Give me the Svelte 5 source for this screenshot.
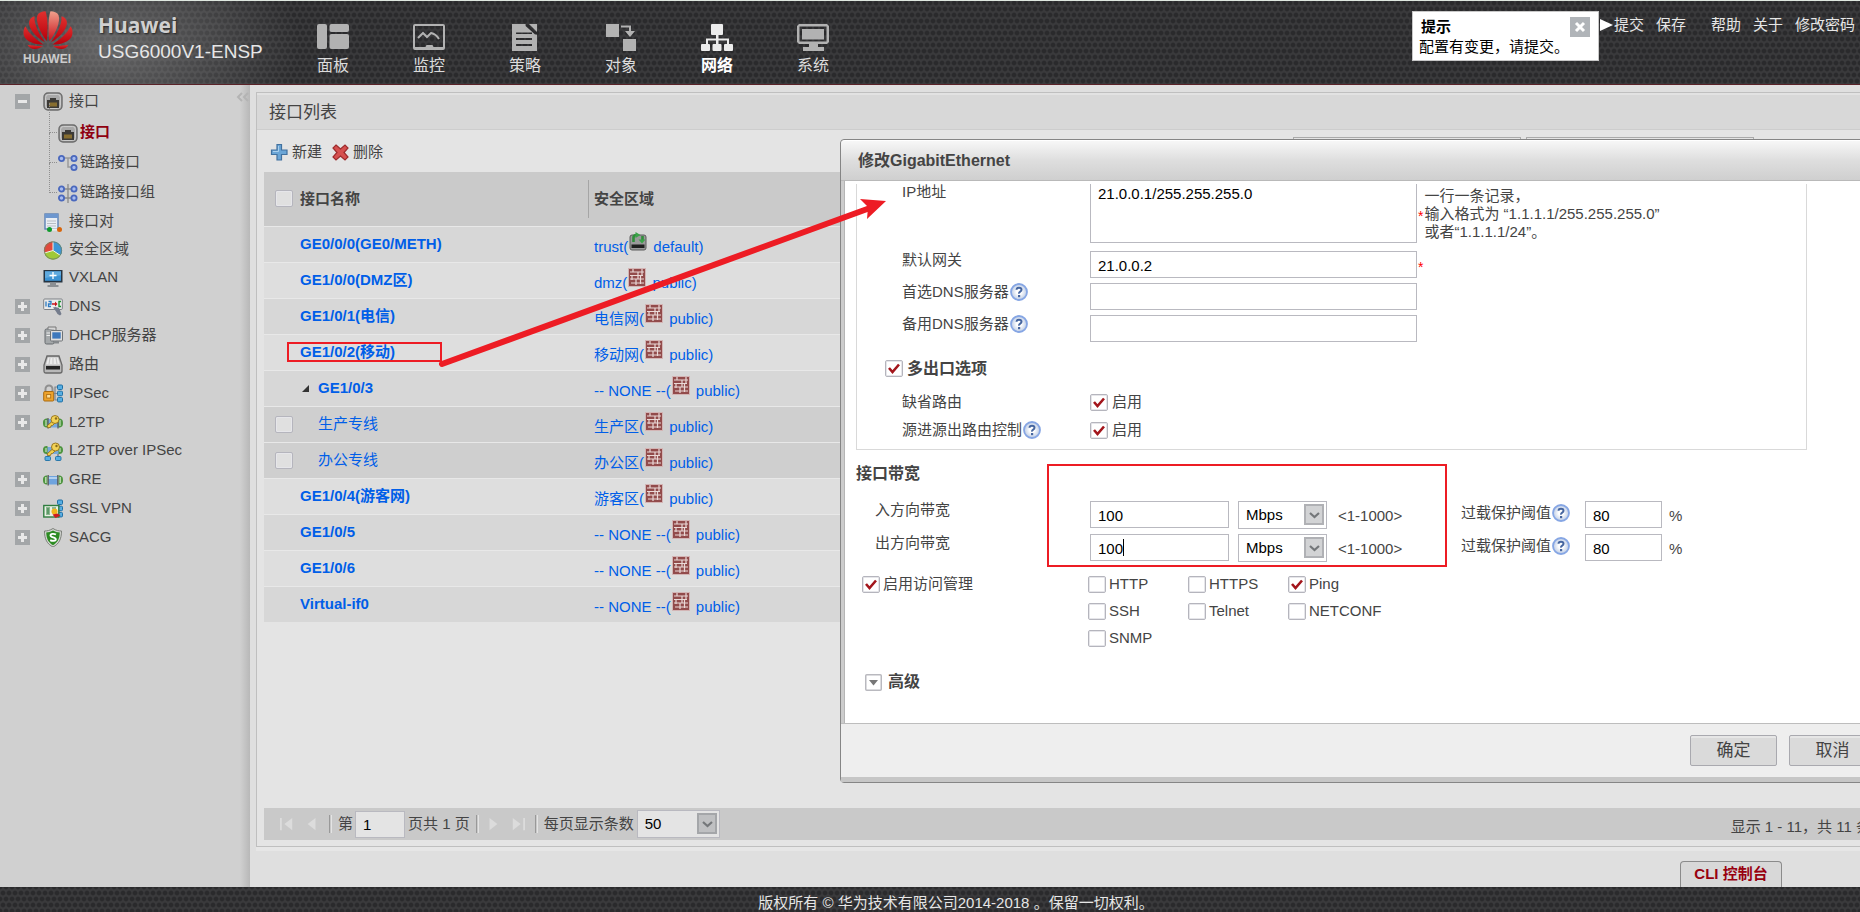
<script>
  const icons = {
    port: '<rect x="1" y="1" width="18" height="17" rx="4" fill="#a9a9a9" stroke="#6b6b6b" stroke-width="1.4"/><rect x="2.6" y="2.4" width="14.8" height="14" rx="3" fill="none" stroke="#cfcfcf"/><path d="M4 16V8h3V6h6v2h3v8z" fill="#3c3a36"/><path d="M7 10.500v4M9 10.500v4M11 10.500v4M13 10.500v4" stroke="#c79a2c" stroke-width="1.1"/>',
    link: '<path d="M6 4h10M10 4v9h5" fill="none" stroke="#9a9a9a" stroke-width="1.5"/><g fill="#a9bdf0" stroke="#4a68bd" stroke-width="1.8"><circle cx="3.500" cy="4.500" r="2.600"/><circle cx="16" cy="4.500" r="2.600"/><circle cx="16" cy="13.500" r="2.600"/></g>',
    linkgroup: '<path d="M10 0v19M6 5h8M6 14h8" fill="none" stroke="#8a8a8a" stroke-width="1.3"/><g fill="#a9bdf0" stroke="#4a68bd" stroke-width="1.8"><circle cx="3.500" cy="5" r="2.600"/><circle cx="16" cy="5" r="2.600"/><circle cx="3.500" cy="14" r="2.600"/><circle cx="16" cy="14" r="2.600"/></g>',
    pair: '<rect x="2" y="1" width="13" height="15" fill="#e9eef4" stroke="#5d82b5" stroke-width="1.4"/><rect x="2" y="1" width="13" height="4" fill="#6d97cf"/><path d="M4 8h9M4 10.500h9M4 13h9" stroke="#b8bdc4"/><path d="M7 16.500h9" stroke="#eee" stroke-width="2"/><circle cx="6.500" cy="16.500" r="2.500" fill="#0f9a2c"/><circle cx="16.500" cy="16.500" r="2.500" fill="#d8650b"/>',
    zone: '<circle cx="10" cy="9.500" r="9" fill="#5a9a22"/><path d="M10 9.500V.5A9 9 0 0 0 1.300 12z" fill="#e0493c"/><path d="M10 9.500V.5a9 9 0 0 1 7.500 14z" fill="#3d96d6"/><path d="M10 9.500 1.300 12A9 9 0 0 0 17.500 14.500z" fill="#9fc938"/><path d="M10 9.500V.5M10 9.500 1.300 12M10 9.500l7.500 5" stroke="#f3f3e8" stroke-width="1"/><circle cx="10" cy="9.500" r="8.600" fill="none" stroke="#6f7f6a" stroke-width=".8"/>',
    vxlan: '<rect x=".5" y="1" width="19" height="12.500" fill="#263442"/><rect x="2" y="2.300" width="16" height="9.500" fill="#3c93d4"/><path d="M2 2.300h16v4L2 9z" fill="#6db4e4" opacity=".7"/><path d="M10 3v7M6.500 6.500h7" stroke="#fff" stroke-width="1.300"/><path d="M7 13.500h6v2.500h2.500v2h-11v-2H7z" fill="#8b8f93"/>',
    dns: '<rect x=".7" y="2" width="18.600" height="10.500" rx="1" fill="#ececec" stroke="#7d8186"/><path d="M3 4.500v5M5.500 4.500H8v2.500H5.500v2.500H8" fill="none" stroke="#2c7ac2" stroke-width="1.300"/><path d="M9 6.300h3V4.500l2.500 2.500L12 9.500V7.700H9z" fill="#c8151b"/><path d="M18 4.500h-2v5h2" fill="none" stroke="#18912e" stroke-width="1.400"/><path d="M10 10.500l2.500-.5 3.500 1 2.500 6-1.500 1.500-2.500-1.500-1.500-2.500z" fill="#747c8c"/>',
    dhcp: '<rect x="2" y="3" width="9" height="15" rx="1.500" fill="#a4a8aa" stroke="#666b6e"/><path d="M5 3V1h8v3" fill="#d6d6d6" stroke="#777"/><path d="M3.500 7h5M3.500 9.500h5" stroke="#eee"/><rect x="7.500" y="4.500" width="12" height="10.500" rx="1" fill="#dedede" stroke="#6e7376"/><rect x="9.300" y="6.300" width="8.400" height="6.300" fill="#3c78bd"/><path d="M11 15h5v2.500h-5z" fill="#85898c"/>',
    route: '<path d="M4 1h12l3 9v6q0 2-2 2H3q-2 0-2-2v-6z" fill="#b9b9b9" stroke="#686868" stroke-width="1.300"/><path d="M5 2.500h10l2 7H3z" fill="#ececec"/><path d="M7 3l-1 6M10 3v6M13 3l1 6" stroke="#c5c5c5"/><rect x="3" y="11" width="14" height="3.500" fill="#262626"/>',
    ipsec: '<path d="M2.500 8V5a3.500 3.500 0 0 1 7 0v3" fill="none" stroke="#8f8f8f" stroke-width="2"/><rect x=".7" y="7.500" width="10" height="9.500" rx="1" fill="#eda22b" stroke="#a96a10"/><rect x="3.700" y="10.500" width="4" height="3.500" fill="#ffe09a" stroke="#a96a10" stroke-width=".8"/><path d="M15 3h-3v13h3M11 9.500h4" fill="none" stroke="#7d838a" stroke-width="1.200"/><g fill="#57aee2" stroke="#1e6fa5"><rect x="14.500" y="1" width="5" height="4.500" rx="1"/><rect x="14.500" y="7.200" width="5" height="4.500" rx="1"/><rect x="14.500" y="13.400" width="5" height="4.500" rx="1"/></g>',
    l2tp: '<rect x="4" y="6" width="12" height="8.500" fill="#78a9dd"/><path d="M4.500 5.500C1 5.500 0 7 0 10s1 4.500 4.500 4.500zM15.500 5.500C19 5.500 20 7 20 10s-1 4.500-4.500 4.500z" fill="#4e9440"/><path d="M3 7v6M17 7v6" stroke="#b9dcae" stroke-width="1.300"/><path d="M5 5v10.500M15 5v10.500" stroke="#555" stroke-width="1.200"/><path d="M10 7.500l-6 5.500 1 1.800 2.500-.4.500-1.600 1.600-.4 3-3" fill="#f0cf4d" stroke="#94711a" stroke-width=".9"/><circle cx="12" cy="6.500" r="4" fill="#f2d257" stroke="#94711a" stroke-width=".9"/><circle cx="13" cy="5.500" r="1.200" fill="#8a6c1c"/>',
    l2tpipsec: '<rect x="4" y="5" width="12" height="7" fill="#78a9dd"/><path d="M4.500 4C1 4 0 5.500 0 8s1 4 4.500 4zM15.500 4C19 4 20 5.500 20 8s-1 4-4.500 4z" fill="#4e9440"/><path d="M3 6v4M17 6v4" stroke="#b9dcae" stroke-width="1.300"/><path d="M5 12v3M15 12v3" stroke="#555"/><path d="M10 6.500l-6 5.500 1 1.800 2.500-.4.500-1.600 1.600-.4 3-3" fill="#f0cf4d" stroke="#94711a" stroke-width=".9"/><circle cx="12.500" cy="5" r="4" fill="#f2d257" stroke="#94711a" stroke-width=".9"/><circle cx="13.500" cy="4" r="1.200" fill="#8a6c1c"/><g fill="#57aee2" stroke="#1e6fa5" stroke-width=".9"><rect x="2" y="14.500" width="5.500" height="4" rx="1"/><rect x="12.500" y="14.500" width="5.500" height="4" rx="1"/></g>',
    gre: '<rect x="5" y="6" width="10" height="8.500" fill="#6fa4de"/><path d="M5 8h10" stroke="#b4d1f0" stroke-width="2"/><path d="M4.500 5.500C1 5.500 0 7 0 10s1 4.500 4.500 4.500zM15.500 5.500C19 5.500 20 7 20 10s-1 4.500-4.500 4.500z" fill="#4e9440"/><path d="M2.800 7v6M17.200 7v6" stroke="#b9dcae" stroke-width="1.500"/><path d="M5.200 5v10.500M14.800 5v10.500" stroke="#5c5c5c" stroke-width="1.300"/>',
    ssl: '<path d="M16 2v15" stroke="#7d838a"/><g fill="#57aee2" stroke="#1e6fa5"><rect x="14.500" y="1" width="5" height="4.500" rx="1"/><rect x="14.500" y="7.200" width="5" height="4.500" rx="1"/><rect x="14.500" y="13.400" width="5" height="4.500" rx="1"/></g><rect x=".8" y="6.500" width="15" height="11.500" fill="#e9f1e4" stroke="#2f7d3f" stroke-width="1.400"/><path d="M3 9h4M3 11h4M3 13h4M3 15h4M5 9v6M9 9h4" stroke="#2f7d3f"/><circle cx="11.500" cy="12.500" r="3" fill="#f1b41b"/><path d="M9.500 15.500l5-1 3 2-2 1-3 1.500z" fill="#cf1b1f"/>',
    sacg: '<path d="M10 .5c3 2 6 2.500 8.500 2.500C18.500 11 16 16 10 19 4 16 1.500 11 1.500 3 4 3 7 2.500 10 .5z" fill="#d5d8d3" stroke="#7b7f79"/><path d="M10 2.500c2 1.300 4.500 2 6.800 2C16.500 11 14.500 14.800 10 17.200 5.500 14.800 3.500 11 3.200 4.500c2.300 0 4.800-.7 6.800-2z" fill="#2c8b22"/><path d="M13 6.500c-2-1-5.500-1-5.500 1 0 2.200 5.300 1.500 5.300 3.700 0 2-3.500 2-5.600.9" fill="none" stroke="#fff" stroke-width="1.900"/>'
  };

  const navIcons = {
    panel: '<rect x="0" y="0" width="10" height="25" rx="2"/><rect x="12.500" y="0" width="19.500" height="8" rx="2"/><rect x="12.500" y="10" width="19.500" height="15" rx="2"/>',
    monitor: '<path fill-rule="evenodd" d="M2 0h28a2 2 0 0 1 2 2v22a2 2 0 0 1-2 2H2a2 2 0 0 1-2-2V2a2 2 0 0 1 2-2zM2 2v21h28V2z"/><path d="M5 14l5-5 4 4 4-4q5 1 8 6" fill="none" stroke="currentColor" stroke-width="2"/><path d="M12 24l1.500-3h6l1.500 3z"/>',
    policy: '<path fill-rule="evenodd" d="M3 0h13l12 11v16H3zM7 8.500V10h16V8.500zM7 14v2h16v-2zM7 20v2h16v-2z"/><path d="M20 0h8v8z"/><path d="M17 1l10 9" stroke="#2b2b2d" stroke-width="2"/>',
    object: '<rect x="1" y="0" width="13" height="13"/><rect x="18" y="15" width="13" height="12"/><path d="M16 1.500h10V7h4l-5 6-5-6h4V3.500h-8z"/>',
    network: '<rect x="10" y="0" width="12" height="11" rx="1"/><path d="M15 10h2.500v4.500H28v6h-2v-4h-8.500v4H15v-4H7v4H5v-6h10z"/><rect x="0" y="20" width="9" height="7" rx="1"/><rect x="11.500" y="20" width="9" height="7" rx="1"/><rect x="23" y="20" width="9" height="7" rx="1"/>',
    system: '<path fill-rule="evenodd" d="M2 0h28l2 2v16l-2 2H2l-2-2V2zM2.500 2.500v15h27v-15z"/><rect x="5" y="5" width="22" height="10.500"/><path d="M12 20h9v3h6v4H6v-4h6z"/>'
  };

  const nav = [
    { icon: 'panel', label: '面板' },
    { icon: 'monitor', label: '监控' },
    { icon: 'policy', label: '策略' },
    { icon: 'object', label: '对象' },
    { icon: 'network', label: '网络', active: true },
    { icon: 'system', label: '系统' }
  ];

  const tree = [
    {
      icon: 'port', label: '接口', toggle: 'minus',
      children: [
        { icon: 'port', label: '接口', active: true },
        { icon: 'link', label: '链路接口' },
        { icon: 'linkgroup', label: '链路接口组' }
      ]
    },
    { icon: 'pair', label: '接口对' },
    { icon: 'zone', label: '安全区域' },
    { icon: 'vxlan', label: 'VXLAN' },
    { icon: 'dns', label: 'DNS', toggle: 'plus' },
    { icon: 'dhcp', label: 'DHCP服务器', toggle: 'plus' },
    { icon: 'route', label: '路由', toggle: 'plus' },
    { icon: 'ipsec', label: 'IPSec', toggle: 'plus' },
    { icon: 'l2tp', label: 'L2TP', toggle: 'plus' },
    { icon: 'l2tpipsec', label: 'L2TP over IPSec' },
    { icon: 'gre', label: 'GRE', toggle: 'plus' },
    { icon: 'ssl', label: 'SSL VPN', toggle: 'plus' },
    { icon: 'sacg', label: 'SACG', toggle: 'plus' }
  ];

  const rows = [
    { name: 'GE0/0/0(GE0/METH)', zone: 'trust', vsys: 'default' },
    { name: 'GE1/0/0(DMZ区)', zone: 'dmz', vsys: 'public' },
    { name: 'GE1/0/1(电信)', zone: '电信网', vsys: 'public' },
    { name: 'GE1/0/2(移动)', zone: '移动网', vsys: 'public' },
    { name: 'GE1/0/3', zone: '-- NONE --', vsys: 'public', open: true },
    { name: '生产专线', zone: '生产区', vsys: 'public', child: true },
    { name: '办公专线', zone: '办公区', vsys: 'public', child: true },
    { name: 'GE1/0/4(游客网)', zone: '游客区', vsys: 'public' },
    { name: 'GE1/0/5', zone: '-- NONE --', vsys: 'public' },
    { name: 'GE1/0/6', zone: '-- NONE --', vsys: 'public' },
    { name: 'Virtual-if0', zone: '-- NONE --', vsys: 'public' }
  ];

  const bandwidths = [
    { id: 'in', label: '入方向带宽' },
    { id: 'out', label: '出方向带宽', focused: true }
  ];

  const services = ['HTTP', 'HTTPS', 'Ping', 'SSH', 'Telnet', 'NETCONF', 'SNMP'];

  let addresses = $state('21.0.0.1/255.255.255.0');
</script>

{#snippet help()}
  <svg class="help" viewBox="0 0 18 18" aria-hidden="true">
    <defs>
      <radialGradient id="help-fill"><stop offset="0.3" stop-color="#fff" /><stop offset="1" stop-color="#bccbe4" /></radialGradient>
    </defs>
    <circle cx="9" cy="9" r="8" fill="url(#help-fill)" stroke="#86a6e4" stroke-width="1.800" />
    <path d="M6.500 6.800Q6.500 4.700 9 4.700t2.500 2q0 1.100-1.300 1.900T9 10.700" fill="none" stroke="#45659f" stroke-width="2" />
    <rect x="8" y="12" width="2.200" height="2.200" fill="#45659f" />
  </svg>
{/snippet}

{#snippet arrow()}
  <svg class="arrow" viewBox="0 0 20 21" aria-hidden="true">
    <rect x="1" y="1" width="18" height="19" fill="none" stroke="currentColor" stroke-width="2" />
    <path d="M6 9l4.500 4L15 9" fill="none" stroke="#74777a" stroke-width="2.200" />
  </svg>
{/snippet}

<div class="page">
  <header class="top">
    <div class="logo">
      <svg viewBox="0 0 50 39" aria-hidden="true">
        <defs>
          <linearGradient id="petal" x1="0" y1="0" x2="0" y2="1"><stop offset="0" stop-color="#e0302e" /><stop offset="1" stop-color="#b8000c" /></linearGradient>
          <linearGradient id="petal-hi" x1="0" y1="0" x2="0" y2="1"><stop offset="0" stop-color="#f0a08c" /><stop offset="1" stop-color="#c8101a" /></linearGradient>
          <g id="petals">
            <path d="M22 31C13 27 4 16 6.500 9.500 7.500 7 10 5.700 11.500 5.300 11 14 16 23 22 31z" />
            <path d="M20.500 33.500C10 34 0 29 .5 21.500.6 18 1.500 16.500 2.500 15.300 6 23 13 28.500 20.500 33.500z" />
            <path d="M20 35C14 39.500 7 39 4.500 33.800 9 34.500 14 35.300 20 35z" />
          </g>
          <path id="center-petal" d="M23.700 30C18 23 12 11 14.500 4 16 1.500 19 .5 22.500.3 24.800 6 25 20 23.700 30z" />
        </defs>
        <use href="#petals" fill="url(#petal)" />
        <use href="#petals" fill="url(#petal)" transform="translate(50) scale(-1 1)" />
        <use href="#center-petal" fill="url(#petal)" />
        <use href="#center-petal" fill="url(#petal-hi)" transform="translate(50) scale(-1 1)" />
      </svg>
      <span>HUAWEI</span>
    </div>
    <div class="product">
      <strong>Huawei</strong>
      <span>USG6000V1-ENSP</span>
    </div>
    <nav class="main-nav">
      {#each nav as item}
        <a href="#{item.icon}" class:active={item.active}>
          <svg viewBox="0 0 32 27" fill="currentColor" aria-hidden="true">{@html navIcons[item.icon]}</svg>
          <span>{item.label}</span>
        </a>
      {/each}
    </nav>
    <div class="notice" role="status">
      <div class="notice-head">
        <strong>提示</strong>
        <button type="button" aria-label="关闭提示">
          <svg viewBox="0 0 20 20" aria-hidden="true"><path d="M6 6l8 8M14 6l-8 8" stroke="#fff" stroke-width="3" /></svg>
        </button>
      </div>
      <p>配置有变更，请提交。</p>
    </div>
    <div class="actions">
      <svg class="pointer" viewBox="0 0 14 14" aria-hidden="true"><path d="M0 1l13 6-13 6z" fill="#fff" /></svg>
      <a href="#commit">提交</a>
      <a href="#save">保存</a>
      <a class="apart" href="#help">帮助</a>
      <a href="#about">关于</a>
      <a href="#password">修改密码</a>
    </div>
  </header>

  <div class="middle">
    <aside class="sidebar">
      <ul class="tree">
        {#each tree as item}
          <li>
            <div class="node" class:leaf={!item.toggle}>
              {#if item.toggle}
                <button type="button" class="toggle" class:plus={item.toggle === 'plus'} aria-label="展开或收起 {item.label}"></button>
              {:else}
                <span class="no-toggle"></span>
              {/if}
              <svg class="ico" viewBox="0 0 20 19" aria-hidden="true">{@html icons[item.icon]}</svg>
              <a href="#{item.icon}">{item.label}</a>
            </div>
            {#if item.children}
              <ul class="sub">
                {#each item.children as child}
                  <li class="node">
                    <svg class="ico" viewBox="0 0 20 19" aria-hidden="true">{@html icons[child.icon]}</svg>
                    <a href="#{child.icon}" class:active={child.active}>{child.label}</a>
                  </li>
                {/each}
              </ul>
            {/if}
          </li>
        {/each}
      </ul>
      <button type="button" class="collapse" aria-label="收起菜单">
        <svg viewBox="0 0 14 20" aria-hidden="true"><path d="M6 6l-4 4 4 4M12 6l-4 4 4 4" fill="none" stroke="#b4b4b4" stroke-width="2" /></svg>
      </button>
    </aside>

    <main>
      <section class="panel">
        <h1>接口列表</h1>
        <div class="toolbar">
          <button type="button">
            <svg viewBox="0 0 19 19" aria-hidden="true"><path d="M7 1.500h4.500V7H17v4.500h-5.500V17H7v-5.500H1.500V7H7z" fill="#6aa5d6" stroke="#41719f" stroke-width="1.200" /><path d="M8.500 3v5.500H3" fill="none" stroke="#a9d0ee" /></svg>
            新建
          </button>
          <button type="button">
            <svg viewBox="0 0 19 19" aria-hidden="true"><path d="M5 2l4.500 4L14 2l3 3-4 4.500 4 4.500-3 3-4.500-4L5 17l-3-3 4-4.500L2 5z" fill="#d6504f" stroke="#9c2b2c" stroke-width="1.200" /></svg>
            删除
          </button>
          <span class="search">
            <input type="text" aria-label="接口名称" />
            <input type="text" aria-label="安全区域" />
          </span>
        </div>

        <table>
          <thead>
            <tr>
              <th class="check"><input type="checkbox" aria-label="全选" /></th>
              <th class="name">接口名称</th>
              <th class="zone">安全区域</th>
            </tr>
          </thead>
          <tbody>
            {#each rows as row}
              <tr class:child={row.child}>
                <td class="check">
                  {#if row.child}<input type="checkbox" aria-label={row.name} />{/if}
                </td>
                <td class="name">
                  <div class="iface">
                    {#if row.open || row.child}
                      <span class="slot">
                        {#if row.open}
                          <svg viewBox="0 0 9 9" aria-hidden="true"><path d="M8 1v7H1z" fill="#333" /></svg>
                        {/if}
                      </span>
                    {/if}
                    <a href="#edit">{row.name}</a>
                  </div>
                </td>
                <td class="zone">
                  <a href="#zone">{row.zone}(<svg viewBox="0 0 18 19" aria-hidden="true">
                    {#if row.vsys === 'default'}
                      <rect x="1" y="3" width="16" height="15" rx="2" fill="#9a9a9a" stroke="#5c5c5c" />
                      <rect x="2.500" y="12.500" width="13" height="3.500" fill="#1f1f1f" />
                      <path d="M4.500 10V5.500Q4.500 3 7.500 3M13.500 4v5" fill="none" stroke="#2f8f3a" stroke-width="2.600" />
                      <path d="M6.500 0l5 3-5 3zM9.500 7.500h7l-3.500 4z" fill="#3ba449" />
                    {:else}
                      <rect x=".5" y=".5" width="17" height="18" fill="#924b4b" stroke="#d3b5b5" />
                      <path d="M2 4h14M2 7.500h13M2 11h14M3 15h13M5 1v3M10 4v7M14 1v6M4 7v5M8 11v6M12.500 7v9" stroke="#ead9d7" stroke-width="1.200" />
                    {/if}
                  </svg>&nbsp;{row.vsys})</a>
                </td>
              </tr>
            {/each}
          </tbody>
        </table>

        <div class="pager">
          <button type="button" aria-label="首页"><svg viewBox="0 0 16 16" aria-hidden="true"><path d="M1 1v14" stroke="currentColor" stroke-width="2" /><path d="M14 1v14L5 8z" fill="currentColor" /></svg></button>
          <button type="button" aria-label="上一页"><svg viewBox="0 0 16 16" aria-hidden="true"><path d="M12 1v14L3 8z" fill="currentColor" /></svg></button>
          <i></i>
          <label for="page-no">第</label>
          <input id="page-no" type="text" value="1" />
          <span class="total">页共 1 页</span>
          <i></i>
          <button type="button" aria-label="下一页"><svg viewBox="0 0 16 16" aria-hidden="true"><path d="M4 1v14l9-7z" fill="currentColor" /></svg></button>
          <button type="button" aria-label="末页"><svg viewBox="0 0 16 16" aria-hidden="true"><path d="M2 1v14l9-7z" fill="currentColor" /><path d="M15 1v14" stroke="currentColor" stroke-width="2" /></svg></button>
          <i></i>
          <label for="page-size">每页显示条数</label>
          <span class="select">
            <select id="page-size"><option>50</option></select>
            {@render arrow()}
          </span>
          <span class="summary">显示 1 - 11，共 11 条</span>
        </div>
      </section>
      <div class="dock"><button type="button">CLI 控制台</button></div>
    </main>
  </div>

  <footer class="bottom">版权所有 © 华为技术有限公司2014-2018 。保留一切权利。</footer>

  <div class="dialog" role="dialog" aria-labelledby="dialog-title">
    <h2 id="dialog-title">修改GigabitEthernet</h2>
    <div class="body">
      <div class="group">
        <div class="row tall">
          <label for="ip">IP地址</label>
          <textarea id="ip" rows="3" bind:value={addresses}></textarea>
          <span class="star">*</span>
          <p class="hint">一行一条记录，<br />输入格式为 “1.1.1.1/255.255.255.0”<br />或者“1.1.1.1/24”。</p>
        </div>
        <div class="row">
          <label for="gw">默认网关</label>
          <input id="gw" type="text" value="21.0.0.2" />
          <span class="star">*</span>
        </div>
        <div class="row">
          <label for="dns1">首选DNS服务器{@render help()}</label>
          <input id="dns1" type="text" />
        </div>
        <div class="row">
          <label for="dns2">备用DNS服务器{@render help()}</label>
          <input id="dns2" type="text" />
        </div>
        <label class="tick multi"><input type="checkbox" checked />多出口选项</label>
        <div class="row short">
          <span>缺省路由</span>
          <label class="tick"><input type="checkbox" checked />启用</label>
        </div>
        <div class="row short">
          <span>源进源出路由控制{@render help()}</span>
          <label class="tick"><input type="checkbox" checked />启用</label>
        </div>
      </div>

      <h3>接口带宽</h3>
      <div class="bands">
        {#each bandwidths as band}
          <div class="band">
            <label for="bw-{band.id}">{band.label}</label>
            <span class="amount">
              <input id="bw-{band.id}" type="text" value="100" />
              {#if band.focused}<span class="caret"></span>{/if}
            </span>
            <span class="select">
              <select aria-label="{band.label}单位"><option>Mbps</option></select>
              {@render arrow()}
            </span>
            <span class="range">&lt;1-1000&gt;</span>
            <label class="limit" for="limit-{band.id}">过载保护阈值{@render help()}</label>
            <input id="limit-{band.id}" type="text" value="80" />
            <span class="unit">%</span>
          </div>
        {/each}
      </div>

      <div class="access">
        <label class="tick"><input type="checkbox" checked />启用访问管理</label>
        <div class="services">
          {#each services as service}
            <label class="tick"><input type="checkbox" checked={service === 'Ping'} />{service}</label>
          {/each}
        </div>
      </div>

      <button type="button" class="advanced">
        <svg viewBox="0 0 17 17" aria-hidden="true"><rect x=".75" y=".75" width="15.500" height="15.500" rx="1" fill="#fff" stroke="#b9b9bf" stroke-width="1.500" /><path d="M4 6h9l-4.500 5.500z" fill="#777" /></svg>
        高级
      </button>
    </div>
    <div class="buttons">
      <button type="button">确定</button>
      <button type="button">取消</button>
    </div>
  </div>

  <svg class="marks" aria-hidden="true">
    <g fill="none" stroke="#ed1c24" stroke-width="2">
      <rect x="288" y="343" width="153" height="18" />
      <rect x="1048" y="465" width="398" height="101" />
    </g>
    <path d="M442 364L870 208" stroke="#ed1c24" stroke-width="6" stroke-linecap="round" />
    <path d="M886 201l-26-2 8 8 -1 12z" fill="#ed1c24" />
  </svg>
</div>

<style>
  :global(body) {
    margin: 0;
    overflow: hidden;
  }

  .page {
    position: relative;
    display: flex;
    flex-direction: column;
    min-width: 1912px;
    height: 100vh;
    background: #dfdfdf;
    color: #444;
    font: 15px/18px "Liberation Sans", "Noto Sans CJK SC", sans-serif;
  }

  .page *,
  .page *::before {
    box-sizing: border-box;
  }

  h1, h2, h3, p, ul {
    margin: 0;
    padding: 0;
    list-style: none;
  }

  a {
    color: inherit;
    text-decoration: none;
    white-space: nowrap;
  }

  svg {
    display: block;
    flex: none;
  }

  button {
    display: flex;
    align-items: center;
    justify-content: center;
    margin: 0;
    padding: 0;
    border: 0;
    background: none;
    color: inherit;
    font: inherit;
  }

  input, textarea, select {
    margin: 0;
    border: 1px solid #b9b9c0;
    border-radius: 0;
    background: #fff;
    color: #000;
    font: inherit;
    outline: 0;
  }

  input[type='text'] {
    height: 27px;
    padding: 2px 7px 0;
  }

  input[type='checkbox'] {
    flex: none;
    appearance: none;
    width: 18px;
    height: 17px;
    border: 1px solid #b5b5bd;
    border-radius: 2px;
    background: #fff center / 14px 13px no-repeat;
    box-shadow: inset 0 0 0 1px #e6e6ea;
  }

  input[type='checkbox']:checked {
    background-image: url("data:image/svg+xml,%3Csvg xmlns='http://www.w3.org/2000/svg' viewBox='0 0 14 13'%3E%3Cpath d='M2 6l3.500 4L12 2.500' fill='none' stroke='%23a3161c' stroke-width='2.600'/%3E%3C/svg%3E");
  }

  .select {
    position: relative;
    display: block;
  }

  .select select {
    appearance: none;
    display: block;
    width: 100%;
    height: 28px;
    padding: 0 7px;
  }

  .arrow {
    position: absolute;
    top: 3px;
    right: 3px;
    width: 20px;
    height: 21px;
    background: #d2d3d5;
    color: #b0b1b5;
    pointer-events: none;
  }

  /* header and footer */
  .top, .bottom {
    flex: none;
    background-color: #3a3a3c;
    background-image:
      radial-gradient(circle, #2a2a2c 26%, transparent 44%),
      radial-gradient(circle, #2a2a2c 26%, transparent 44%);
    background-size: 6px 12px, 6px 12px;
    background-position: 0 0, 3px 6px;
    color: #e6e6e6;
  }

  .top {
    display: flex;
    height: 85px;
    border-top: 1px solid #dfe8e0;
    border-bottom: 1px solid #5a2228;
    background-image:
      radial-gradient(ellipse 190px 110px at 110px 44px, rgba(160, 160, 160, 0.5), transparent),
      radial-gradient(circle, #2a2a2c 26%, transparent 44%),
      radial-gradient(circle, #2a2a2c 26%, transparent 44%);
    background-size: auto, 6px 12px, 6px 12px;
    background-position: 0 0, 0 2px, 3px 8px;
  }

  .logo {
    width: 50px;
    margin: 10px 25px 0 23px;
    color: #ccc;
    font-size: 12px;
    font-weight: bold;
    line-height: 18px;
  }

  .logo svg {
    width: 50px;
    height: 39px;
  }

  .product {
    display: flex;
    flex-direction: column;
    width: 211px;
    padding-top: 11px;
    font-size: 19px;
    line-height: 26px;
  }

  .product strong {
    color: #d0d0d0;
    font: bold 21px/27px "Open Sans", sans-serif;
    text-shadow: 1px 1px 2px #222;
  }

  .main-nav {
    display: flex;
    flex: 1;
    gap: 48px;
    padding-top: 23px;
  }

  .main-nav a {
    display: flex;
    flex-direction: column;
    width: 48px;
    align-items: center;
    height: 52px;
    color: #b2b2b2;
    font-size: 16px;
  }

  .main-nav span {
    margin-top: 6px;
    color: #dcdcdc;
  }

  .main-nav svg {
    width: 32px;
    height: 27px;
  }

  .main-nav .active {
    color: #ececec;
    font-weight: bold;
  }

  .main-nav .active span {
    color: #fff;
  }

  .notice {
    width: 187px;
    height: 50px;
    margin-top: 10px;
    padding: 5px 8px 0 6px;
    border: 1px solid #c8c8c8;
    background: #fff;
    color: #000;
  }

  .notice-head {
    display: flex;
    align-items: center;
    justify-content: space-between;
    padding-left: 2px;
  }

  .notice p {
    padding-top: 1px;
  }

  .notice button {
    width: 20px;
    height: 20px;
    background: #b0b4b8;
  }

  .notice svg {
    width: 20px;
  }

  .actions {
    display: flex;
    align-items: center;
    gap: 12px;
    width: 313px;
    height: 34px;
    margin-top: 7px;
  }

  .pointer {
    width: 14px;
    height: 14px;
    margin-right: -12px;
    margin-left: 1px;
  }

  .apart {
    margin-left: 13px;
  }

  .bottom {
    height: 25px;
    line-height: 31px;
    text-align: center;
    overflow: hidden;
  }

  /* sidebar */
  .middle {
    display: flex;
    flex: 1;
    min-height: 0;
  }

  .sidebar {
    display: flex;
    flex: none;
    justify-content: space-between;
    width: 250px;
    padding-top: 2px;
    background: linear-gradient(to right, #d0d0d0 240px, #b8b8b8);
  }

  .node {
    display: flex;
    align-items: center;
    height: 29px;
  }

  .node.leaf {
    height: 28px;
  }

  .node a {
    padding-bottom: 2px;
  }

  .node .active {
    color: #8f0010;
    font-weight: bold;
  }

  .toggle, .no-toggle {
    width: 15px;
    height: 15px;
    margin: 0 13px 0 15px;
  }

  .toggle {
    background:
      linear-gradient(#e8e8e8, #e8e8e8) center / 9px 3px no-repeat,
      #a3a6a8;
  }

  .toggle.plus {
    background:
      linear-gradient(#e8e8e8, #e8e8e8) center / 9px 3px no-repeat,
      linear-gradient(#e8e8e8, #e8e8e8) center / 3px 9px no-repeat,
      #a3a6a8;
  }

  .ico {
    width: 20px;
    height: 19px;
    margin-right: 6px;
  }

  .sub {
    margin-left: 49px;
    padding-top: 2px;
  }

  .sub .node {
    position: relative;
    height: 30px;
    padding-left: 9px;
  }

  .sub .node::before {
    content: '';
    position: absolute;
    top: -15px;
    left: 0;
    width: 8px;
    height: 30px;
    border: 1px dotted #8f8f8f;
    border-width: 0 0 1px 1px;
  }

  .sub .ico {
    margin-right: 2px;
  }

  .collapse {
    width: 15px;
    height: 20px;
  }

  .collapse svg {
    width: 14px;
  }

  /* interface list */
  main {
    display: flex;
    flex: 1;
    flex-direction: column;
    padding: 7px 6px 0;
  }

  .panel {
    display: flex;
    flex: 1;
    flex-direction: column;
    padding: 0 7px 6px;
    border: 1px solid #bfbfbf;
    background: #e4e4e4;
    box-shadow: 0 4px #e6e6e6;
  }

  h1 {
    height: 37px;
    margin: 0 -7px;
    padding: 1px 12px 0;
    border-top: 2px solid #e2e2e2;
    border-bottom: 1px solid #cdcdcd;
    background: #d8d8d8;
    font-size: 17px;
    font-weight: normal;
    line-height: 33px;
  }

  .toolbar {
    display: flex;
    gap: 9px;
    height: 42px;
    padding-left: 6px;
  }

  .toolbar button {
    gap: 3px;
    padding-top: 2px;
  }

  .toolbar svg {
    width: 19px;
    height: 19px;
  }

  .search {
    display: flex;
    gap: 5px;
    margin: 7px 144px 0 auto;
  }

  .search input {
    width: 228px;
    border-color: #aaa;
    background: #e4e4e4;
  }

  table {
    width: 100%;
    border-collapse: collapse;
    table-layout: fixed;
  }

  th {
    height: 54px;
    padding: 0;
    background: #cacaca;
    text-align: left;
  }

  th.zone {
    background: linear-gradient(#a5a5a5, #a5a5a5) 0 8px / 1px 38px no-repeat #cacaca;
  }

  td {
    height: 36px;
    padding: 0;
    border-top: 1px solid #e8e8e8;
    background: #d7d7d7;
    color: #005ee8;
  }

  tr:nth-child(even) td {
    background: #dedede;
  }

  tr.child td {
    background: #cfcfcf;
  }

  .check {
    width: 36px;
    padding-left: 11px;
  }

  .check input {
    display: block;
    background-color: #e0e0e0;
  }

  .name {
    width: 288px;
  }

  th.zone, td.zone {
    padding-left: 6px;
  }

  .iface {
    display: flex;
    align-items: center;
    font-weight: bold;
  }

  .child .iface {
    font-weight: normal;
  }

  .slot {
    width: 18px;
    padding-left: 1px;
  }

  .slot svg {
    width: 9px;
  }

  td.zone svg {
    display: inline-block;
    width: 18px;
    height: 19px;
    margin: 0 2px 0 1px;
    vertical-align: 1px;
  }

  .pager {
    display: flex;
    align-items: center;
    height: 32px;
    margin-top: auto;
    padding: 0 27px 0 15px;
    background: #c9c9c9;
  }

  .pager button {
    width: 16px;
    margin-right: 9px;
    color: #dcdcdc;
  }

  .pager button svg {
    width: 16px;
    height: 14px;
  }

  .pager i {
    width: 3px;
    height: 18px;
    margin: 0 6px 0 0;
    border: 1px solid #999;
    border-width: 0 0 0 1px;
    box-shadow: inset -1px 0 #e4e4e4;
  }

  .pager input {
    width: 50px;
    margin: 0 3px 0 2px;
    padding-top: 0;
    background: #e4e4e4;
  }

  .total {
    margin-right: 6px;
  }

  .pager .select {
    width: 83px;
    margin-left: 3px;
  }

  .pager select {
    background: #e4e4e4;
  }

  .pager .arrow {
    background: #bfc0c2;
    color: #a4a6a9;
  }

  .summary {
    margin-left: auto;
    padding-top: 5px;
  }

  .dock {
    display: flex;
    justify-content: flex-end;
    padding: 14px 124px 0 0;
  }

  .dock button {
    width: 102px;
    height: 26px;
    padding-bottom: 2px;
    border: 1px solid #8b8b8b;
    border-bottom: 0;
    border-radius: 4px 4px 0 0;
    background: #d8d8d8;
    color: #98000f;
    font-weight: bold;
  }

  /* edit dialog */
  .dialog {
    position: absolute;
    top: 139px;
    right: 15px;
    left: 840px;
    border: 1px solid #858585;
    border-radius: 4px;
    background: #ccc;
  }

  h2 {
    height: 41px;
    padding-left: 17px;
    border-top: 1px solid #fff;
    border-bottom: 1px solid #b9b9b9;
    border-radius: 4px 4px 0 0;
    background: linear-gradient(#f7f7f7, #dedede 50%, #cfcfcf);
    font-size: 16px;
    line-height: 40px;
  }

  .body {
    margin: 0 3px;
    padding: 3px 11px 32px;
    border-left: 1px solid #b5b5b5;
    background: #fff;
  }

  .group {
    display: flex;
    flex-direction: column;
    width: 951px;
    padding: 0 0 10px 45px;
    border: 1px solid #d9d9d9;
    border-top: 0;
  }

  .row {
    display: grid;
    grid-template-columns: 188px 327px auto 1fr;
    margin-bottom: 5px;
  }

  .row.tall {
    height: 59px;
    margin-bottom: 8px;
  }

  .row.tall label {
    line-height: 15px;
  }

  .row label, .row > span, .band label {
    display: flex;
    height: 18px;
    white-space: nowrap;
  }

  textarea {
    height: 59px;
    padding: 1px 7px;
    border-top: 0;
    overflow: hidden;
    resize: none;
  }

  .row .star {
    align-self: center;
    padding: 2px 1px 0;
    color: #f00;
    font-size: 14px;
  }

  .row .hint {
    padding-top: 3px;
  }

  .help {
    width: 18px;
    height: 18px;
    margin-left: 1px;
  }

  .tick {
    display: flex;
    gap: 4px;
    align-items: center;
    height: 17px;
    white-space: nowrap;
  }

  .multi {
    margin: 13px 0 16px -17px;
    font-size: 16px;
    font-weight: bold;
  }

  .row.short {
    margin-bottom: 10px;
  }

  .row.short:last-child {
    margin-bottom: 0;
  }

  h3 {
    margin-top: 14px;
    font-size: 16px;
    line-height: 20px;
  }

  .bands {
    display: grid;
    gap: 6px;
    margin-top: 17px;
  }

  .band {
    display: flex;
    height: 27px;
    align-items: flex-start;
    padding-left: 19px;
  }

  .band > label {
    width: 215px;
  }

  .band .amount {
    position: relative;
    width: 139px;
    margin-right: 9px;
  }

  .band .amount input {
    display: block;
    width: 100%;
  }

  .band .select {
    width: 89px;
    margin-right: 11px;
  }

  .range, .unit {
    line-height: 29px;
    white-space: nowrap;
  }

  .range {
    width: 123px;
  }

  .band > .limit {
    width: 124px;
    padding-top: 3px;
    box-sizing: content-box;
  }

  .band > input {
    width: 77px;
    margin-right: 7px;
  }

  .caret {
    position: absolute;
    top: 5px;
    left: 33px;
    width: 1px;
    height: 17px;
    background: #000;
  }

  .access {
    display: grid;
    grid-template-columns: 226px auto;
    margin-top: 14px;
    padding-left: 6px;
  }

  .access .tick {
    gap: 3px;
    height: 18px;
  }

  .services {
    display: grid;
    grid-template-columns: repeat(3, 100px);
    gap: 9px 0;
  }

  .advanced {
    gap: 6px;
    margin-top: 26px;
    margin-left: 9px;
    font-size: 16px;
    font-weight: bold;
  }

  .advanced svg {
    width: 17px;
  }

  .buttons {
    display: flex;
    gap: 12px;
    justify-content: flex-end;
    height: 59px;
    padding: 11px 20px 0 0;
    border-top: 1px solid #bdbdbd;
    border-bottom: 5px solid #c6c6c6;
    background: #eee;
  }

  .buttons button {
    width: 87px;
    height: 31px;
    border: 1px solid #a9a9af;
    border-radius: 2px;
    background: #dadada;
    box-shadow: inset 0 2px #e6e6e6;
    font-size: 17px;
  }

  .marks {
    position: absolute;
    top: 0;
    left: 0;
    width: 100%;
    height: 100%;
    pointer-events: none;
  }
</style>
